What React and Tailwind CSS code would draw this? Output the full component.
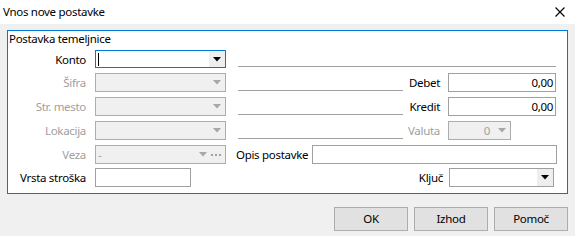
import React from 'react';

function Arrow({ disabled }) {
  return (
    <svg width="8" height="5" viewBox="0 0 8 5" className="shrink-0">
      <path d="M0 0 H8 L4 4.5 Z" fill={disabled ? '#a8a8a8' : '#000'} />
    </svg>
  );
}

function Dots() {
  return (
    <svg width="10" height="2" viewBox="0 0 10 2" className="shrink-0 mr-[4px]">
      <rect x="0" y="0" width="2" height="2" fill="#a0a0a0" />
      <rect x="4" y="0" width="2" height="2" fill="#a0a0a0" />
      <rect x="8" y="0" width="2" height="2" fill="#a0a0a0" />
    </svg>
  );
}

function DisabledCombo({ text, dots, className }) {
  return (
    <div className={`h-[19px] border border-[#adadad] bg-[#f0f0f0] flex items-center text-[#a0a0a0] ${className}`}>
      <span className="flex-1 pl-[2px] leading-none">{text}</span>
      <span className="w-[16px] flex justify-center"><Arrow disabled /></span>
      {dots && <Dots />}
    </div>
  );
}

function Line({ w, h }) {
  return <div className={`${w} ${h} border-b border-[#a0a0a0] ml-[12px]`} />;
}

export default function App() {
  const label = 'w-[78px] text-right shrink-0 leading-[19px] whitespace-nowrap';
  const dis = 'text-[#a0a0a0]';

  return (
    <div className="w-[575px] h-[236px] bg-[#f0f0f0] font-['Noto_Sans',sans-serif] text-[11.5px] tracking-[-0.3px] text-black overflow-hidden">
      <div className="h-[24px] bg-white flex items-center justify-between pl-[3px] pr-[10px]">
        <span>Vnos nove postavke</span>
        <svg width="10" height="10" viewBox="0 0 10 10">
          <path d="M0.5 0.5 L9.5 9.5 M9.5 0.5 L0.5 9.5" stroke="#000" strokeWidth="1.1" />
        </svg>
      </div>

      <div className="pl-[7px] pr-[7px] pt-[6px]">
        <div className="h-[164px] border border-[#0078d7] bg-white">
          <div className="pl-[1px] leading-[16px]">Postavka temeljnice</div>

          {/* Konto */}
          <div className="flex items-start h-[23px] mt-[3px]">
            <div className={`${label} leading-[18px]`}>Konto</div>
            <div className="ml-[9px] w-[131px] h-[18px] border border-[#0078d7] flex items-center">
              <span className="ml-[2px] w-px h-[13px] bg-black" />
              <span className="flex-1" />
              <span className="w-[16px] h-full bg-[#eeeeee] flex items-center justify-center"><Arrow /></span>
            </div>
            <Line w="w-[318px]" h="h-[17px]" />
          </div>

          {/* Šifra / Debet */}
          <div className="flex items-start h-[24px]">
            <div className={`${label} ${dis}`}>Šifra</div>
            <DisabledCombo className="ml-[9px] w-[131px]" />
            <Line w="w-[165px]" h="h-[18px]" />
            <div className="w-[37px] text-right leading-[19px]">Debet</div>
            <div className="ml-[8px] w-[108px] h-[19px] border border-[#a0a0a0] text-right pr-[2px] leading-[17px]">0,00</div>
          </div>

          {/* Str. mesto / Kredit */}
          <div className="flex items-start h-[24px]">
            <div className={`${label} ${dis}`}>Str. mesto</div>
            <DisabledCombo className="ml-[9px] w-[131px]" />
            <Line w="w-[165px]" h="h-[18px]" />
            <div className="w-[37px] text-right leading-[19px]">Kredit</div>
            <div className="ml-[8px] w-[108px] h-[19px] border border-[#a0a0a0] text-right pr-[2px] leading-[17px]">0,00</div>
          </div>

          {/* Lokacija / Valuta */}
          <div className="flex items-start h-[24px]">
            <div className={`${label} ${dis}`}>Lokacija</div>
            <DisabledCombo className="ml-[9px] w-[131px]" />
            <Line w="w-[165px]" h="h-[18px]" />
            <div className={`w-[37px] text-right leading-[19px] ${dis}`}>Valuta</div>
            <div className="ml-[8px] w-[63px] h-[19px] border border-[#adadad] bg-[#f0f0f0] flex items-center text-[#a0a0a0]">
              <span className="flex-1 text-right pr-[4px] leading-none">0</span>
              <span className="w-[16px] flex justify-center"><Arrow disabled /></span>
            </div>
          </div>

          {/* Veza / Opis postavke */}
          <div className="flex items-start h-[23px]">
            <div className={`${label} ${dis}`}>Veza</div>
            <DisabledCombo className="ml-[9px] w-[131px]" text="-" dots />
            <div className="ml-[10px] w-[76px] shrink-0 whitespace-nowrap leading-[19px]">Opis postavke</div>
            <div className="w-[245px] h-[19px] border border-[#a0a0a0]" />
          </div>

          {/* Vrsta stroška / Ključ */}
          <div className="flex items-start h-[23px]">
            <div className={label}>Vrsta stroška</div>
            <div className="ml-[9px] w-[96px] h-[19px] border border-[#a0a0a0]" />
            <div className="w-[252px] text-right leading-[19px]">Ključ</div>
            <div className="ml-[6px] w-[105px] h-[19px] border border-[#a0a0a0] flex items-center">
              <span className="flex-1" />
              <span className="w-[16px] h-full bg-[#eeeeee] flex items-center justify-center"><Arrow /></span>
            </div>
          </div>
        </div>

        <div className="flex justify-end gap-[6px] mt-[13px]">
          <button className="w-[74px] h-[24px] bg-[#e1e1e1] border border-[#adadad]">OK</button>
          <button className="w-[74px] h-[24px] bg-[#e1e1e1] border border-[#adadad]">Izhod</button>
          <button className="w-[74px] h-[24px] bg-[#e1e1e1] border border-[#adadad]">Pomoč</button>
        </div>
      </div>
    </div>
  );
}
